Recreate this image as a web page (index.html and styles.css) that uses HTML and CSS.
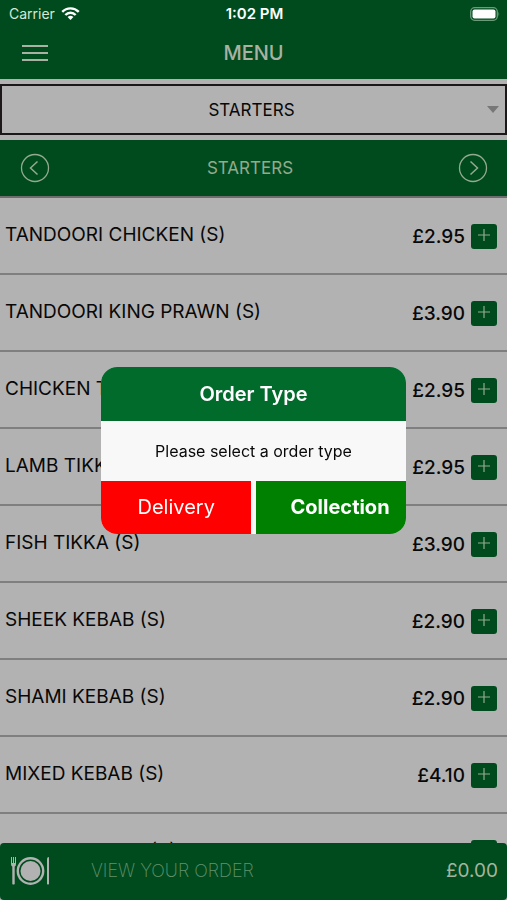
FILE: index.html
```html
<!DOCTYPE html>
<html lang="en">
<head>
<meta charset="utf-8">
<meta name="viewport" content="width=device-width, initial-scale=1">
<title>Menu</title>
<link rel="stylesheet" href="styles.css">
</head>
<body>
<div class="app">
  <header class="header">
    <div class="status">
      <span class="carrier">Carrier
        <svg class="wifi" viewBox="0 0 20 16" aria-hidden="true"><g fill="none" stroke="currentColor" stroke-width="2.6"><path d="M1.2 6.2C6 1.3 14 1.3 18.800 6.2"/><path d="M4.500 9.600C7.600 6.500 12.400 6.500 15.500 9.600"/></g><path fill="currentColor" d="M6.900 11.800Q10 9 13.100 11.800L10 15Z"/></svg>
      </span>
      <span class="time">1:02 PM</span>
      <svg class="battery" viewBox="0 0 30 14" aria-hidden="true"><rect x=".7" y=".7" width="26.600" height="12.600" rx="4" fill="none" stroke="#6b9c78" stroke-width="1.300"/><rect x="2.500" y="2.500" width="23" height="9" rx="2" fill="#fff"/><path d="M28.500 4.500q1.500 2.500 0 5z" fill="#6b9c78"/></svg>
    </div>
    <div class="titlebar">
      <button class="icon-button" type="button" aria-label="Open navigation">
        <svg class="burger" viewBox="0 0 26 18"><path d="M0 2h26M0 9h26M0 16h26" stroke="currentColor" stroke-width="2"/></svg>
      </button>
      <h1>MENU</h1>
    </div>
  </header>

  <div class="picker">
    <select aria-label="Menu section"><option>STARTERS</option></select>
    <svg class="caret" viewBox="0 0 12 7" aria-hidden="true"><path d="M0 0h12L6 7z" fill="currentColor"/></svg>
  </div>

  <nav class="section">
    <button class="icon-button" type="button" aria-label="Previous section">
      <svg class="round" viewBox="0 0 30 30" fill="none" stroke="currentColor"><circle cx="15" cy="15" r="13.500" stroke-width="1.300"/><path d="M17.500 8.500L10.500 15l7 6.500" stroke-width="1.500"/></svg>
    </button>
    <h2>STARTERS</h2>
    <button class="icon-button" type="button" aria-label="Next section">
      <svg class="round" viewBox="0 0 30 30" fill="none" stroke="currentColor"><circle cx="15" cy="15" r="13.500" stroke-width="1.300"/><path d="M12.500 8.500L19.500 15l-7 6.500" stroke-width="1.500"/></svg>
    </button>
  </nav>

  <ul class="items">
    <li><span class="name">TANDOORI CHICKEN (S)</span><span class="price">£2.95</span><button class="add" type="button" aria-label="Add Tandoori Chicken"><svg viewBox="0 0 14 14"><path d="M7 1v12M1 7h12"/></svg></button></li>
    <li><span class="name">TANDOORI KING PRAWN (S)</span><span class="price">£3.90</span><button class="add" type="button" aria-label="Add Tandoori King Prawn"><svg viewBox="0 0 14 14"><path d="M7 1v12M1 7h12"/></svg></button></li>
    <li><span class="name">CHICKEN TIKKA (S)</span><span class="price">£2.95</span><button class="add" type="button" aria-label="Add Chicken Tikka"><svg viewBox="0 0 14 14"><path d="M7 1v12M1 7h12"/></svg></button></li>
    <li><span class="name">LAMB TIKKA (S)</span><span class="price">£2.95</span><button class="add" type="button" aria-label="Add Lamb Tikka"><svg viewBox="0 0 14 14"><path d="M7 1v12M1 7h12"/></svg></button></li>
    <li><span class="name">FISH TIKKA (S)</span><span class="price">£3.90</span><button class="add" type="button" aria-label="Add Fish Tikka"><svg viewBox="0 0 14 14"><path d="M7 1v12M1 7h12"/></svg></button></li>
    <li><span class="name">SHEEK KEBAB (S)</span><span class="price">£2.90</span><button class="add" type="button" aria-label="Add Sheek Kebab"><svg viewBox="0 0 14 14"><path d="M7 1v12M1 7h12"/></svg></button></li>
    <li><span class="name">SHAMI KEBAB (S)</span><span class="price">£2.90</span><button class="add" type="button" aria-label="Add Shami Kebab"><svg viewBox="0 0 14 14"><path d="M7 1v12M1 7h12"/></svg></button></li>
    <li><span class="name">MIXED KEBAB (S)</span><span class="price">£4.10</span><button class="add" type="button" aria-label="Add Mixed Kebab"><svg viewBox="0 0 14 14"><path d="M7 1v12M1 7h12"/></svg></button></li>
    <li><span class="name">RESHMI KEBAB (S)</span><span class="price">£3.90</span><button class="add" type="button" aria-label="Add Reshmi Kebab"><svg viewBox="0 0 14 14"><path d="M7 1v12M1 7h12"/></svg></button></li>
  </ul>

  <footer class="order">
    <svg class="plate" viewBox="0 0 40 30" aria-hidden="true"><g fill="currentColor"><path d="M0 1h1v6h1V1h1v6h1V1h1v7q0 2-1.300 2.500V28q-1.200 1.200-2.400 0V10.500Q0 10 0 8zM36 28V3q0-2 2-2v27q-1 1-2 0z"/><circle cx="19.500" cy="15" r="10"/></g><circle cx="19.500" cy="15" r="12.700" fill="none" stroke="currentColor" stroke-width="2.400"/></svg>
    <a class="view" href="#order">VIEW YOUR ORDER</a>
    <span class="total">£0.00</span>
  </footer>
</div>

<div class="overlay">
  <section class="dialog" role="dialog" aria-modal="true" aria-labelledby="dialog-title">
    <h2 id="dialog-title">Order Type</h2>
    <p>Please select a order type</p>
    <div class="actions">
      <button class="delivery" type="button">Delivery</button>
      <button class="collection" type="button">Collection</button>
    </div>
  </section>
</div>
</body>
</html>
```
FILE: styles.css
```css
* { box-sizing: border-box; }

body {
  margin: 0;
  background: #b2b2b2;
  color: #080808;
  font-family: Inter, "Liberation Sans", sans-serif;
}

button, select {
  font: inherit;
  color: inherit;
  border: 0;
  padding: 0;
  margin: 0;
}

h1, h2, p, ul { margin: 0; padding: 0; }

svg { display: block; }

.app {
  height: 100vh;
  display: flex;
  flex-direction: column;
  overflow: hidden;
}

.header {
  flex: none;
  background: #004b1e;
  color: #a9b2a2;
}

.status {
  display: grid;
  grid-template-columns: 1fr auto 1fr;
  align-items: center;
  height: 26px;
  padding: 1px 7px 0 9px;
  color: #fff;
  font-size: 14px;
}

.carrier {
  display: flex;
  align-items: center;
  gap: 6px;
  color: #d5e8d3;
}

.wifi { width: 19px; height: 15px; color: #fff; }

.time { font-size: 15px; font-weight: 600; }

.battery { width: 30px; height: 14px; justify-self: end; }

.titlebar {
  display: grid;
  grid-template-columns: 1fr auto 1fr;
  align-items: center;
  height: 53px;
  padding: 0 22px;
}

.titlebar h1 { font-size: 20px; font-weight: 500; }

.icon-button { background: none; justify-self: start; }

.burger { width: 26px; height: 18px; }

.picker {
  flex: none;
  position: relative;
  padding: 5px 0;
}

.picker select {
  display: block;
  width: 100%;
  height: 51px;
  appearance: none;
  background: #b2b2b2;
  border: 2px solid #1c181a;
  border-radius: 0;
  padding: 0 4px 0 0;
  text-align: center;
  text-align-last: center;
  font-size: 17px;
}

.caret {
  position: absolute;
  right: 8px;
  top: 27px;
  width: 12px;
  height: 7px;
  color: #777;
}

.section {
  flex: none;
  display: flex;
  align-items: center;
  height: 58px;
  padding: 0 19px 0 20px;
  background: #004b1e;
  color: #94aa8d;
  border-bottom: 2px solid #6d6d6d;
}

.section h2 {
  flex: 1;
  padding-right: 8px;
  font-size: 17px;
  font-weight: 400;
  text-align: center;
}

.round { width: 30px; height: 30px; }

.items {
  flex: 1;
  min-height: 0;
  overflow: hidden;
  list-style: none;
}

.items li {
  display: flex;
  align-items: center;
  height: 77px;
  padding: 2px 10px 0 5px;
  border-bottom: 2px solid #7f7f7f;
  font-size: 19px;
}

.name { flex: 1; padding-bottom: 4px; }

.price { margin-right: 6px; font-weight: 500; }

.add {
  display: grid;
  place-items: center;
  width: 26px;
  height: 25px;
  padding-bottom: 3px;
  border-radius: 3px;
  background: #004b1e;
}

.add svg { width: 14px; height: 14px; stroke: #94aa8d; stroke-width: 1.2; }

.order {
  flex: none;
  display: flex;
  align-items: center;
  height: 57px;
  padding: 0 9px 2px 11px;
  border-radius: 4px;
  background: #004b1e;
}

.plate { width: 40px; height: 30px; color: #b2b2b2; }

.view {
  flex: 1;
  padding-left: 40px;
  color: #63916a;
  font-size: 18px;
  font-weight: 200;
  text-decoration: none;
}

.total { color: #a5b49d; font-size: 19px; }

.overlay {
  position: fixed;
  inset: 0;
  display: flex;
  align-items: center;
  justify-content: center;
}

.dialog {
  width: 60%;
  overflow: hidden;
  border-radius: 16px;
  background: #f8f8f8;
  text-align: center;
}

.dialog h2 {
  background: #006b2b;
  color: #fff;
  font-size: 20px;
  font-weight: 600;
  line-height: 54px;
}

.dialog p { font-size: 16px; line-height: 60px; }

.actions {
  display: grid;
  grid-template-columns: 1fr 1fr;
  gap: 5px;
  color: #fff;
  font-size: 20px;
  line-height: 53px;
}

.delivery { background: #f00; }

.collection {
  padding-right: 16px;
  background: #008000;
  font-weight: 700;
  text-align: right;
}
```
